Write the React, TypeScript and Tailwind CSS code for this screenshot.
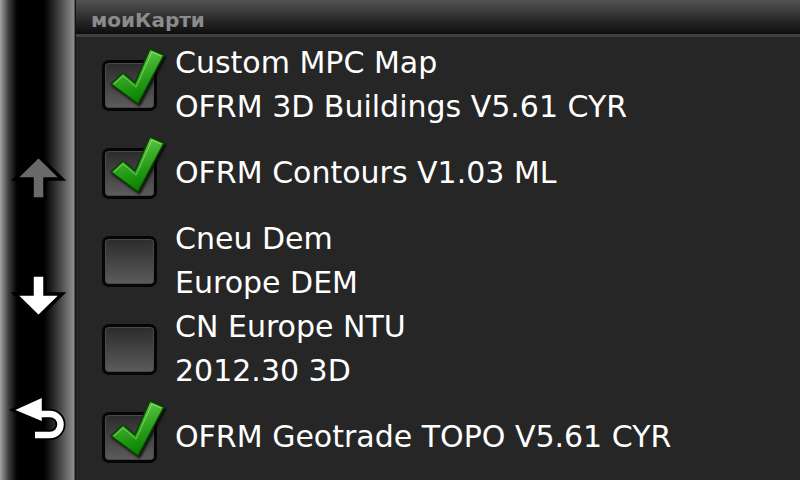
import React from 'react';

type MapItem = {
  lines: string[];
  checked: boolean;
};

const maps: MapItem[] = [
  { lines: ['Custom MPC Map', 'OFRM 3D Buildings V5.61 CYR'], checked: true },
  { lines: ['OFRM Contours V1.03 ML'], checked: true },
  { lines: ['Cneu Dem', 'Europe DEM'], checked: false },
  { lines: ['CN Europe NTU', '2012.30 3D'], checked: false },
  { lines: ['OFRM Geotrade TOPO V5.61 CYR'], checked: true },
];

const CheckMark = ({ id }: { id: string }) => (
  <svg
    className="absolute left-0 top-[-12px]"
    width="68"
    height="62"
    viewBox="0 0 68 62"
  >
    <defs>
      <linearGradient id={`g-${id}`} x1="0" y1="0" x2="0.3" y2="1">
        <stop offset="0" stopColor="#7ddc62" />
        <stop offset="0.45" stopColor="#3fb02a" />
        <stop offset="1" stopColor="#078200" />
      </linearGradient>
      <filter id={`s-${id}`} x="-20%" y="-20%" width="150%" height="150%">
        <feDropShadow dx="1.5" dy="2" stdDeviation="1.2" floodColor="#000" floodOpacity="0.8" />
      </filter>
    </defs>
    <polygon
      points="9,36 21,25 33,35 48,1 62,7 36,56"
      fill={`url(#g-${id})`}
      stroke="#0b3d04"
      strokeWidth="1.5"
      strokeLinejoin="round"
      filter={`url(#s-${id})`}
    />
    <polyline
      points="12,36 21,28 34,39 50,4 59,8"
      fill="none"
      stroke="#a8ee8e"
      strokeOpacity="0.6"
      strokeWidth="1"
    />
  </svg>
);

const CheckBox = ({ checked, id }: { checked: boolean; id: string }) => (
  <div className="relative w-[55px] h-[51px] mt-[9px] shrink-0">
    <div className="w-full h-full rounded-[7px] border-[3px] border-[#050505] bg-gradient-to-b from-[#2c2c2c] to-[#5c5c5c] shadow-[inset_0_0_0_1px_#4a4a4a]" />
    {checked && <CheckMark id={id} />}
  </div>
);

export default function App() {
  return (
    <div className="w-[800px] h-[480px] flex bg-[#262626] overflow-hidden font-['DejaVu_Sans',sans-serif]">
      {/* left rail */}
      <div className="w-[76px] h-full flex flex-col shrink-0 bg-[linear-gradient(to_right,#a4a4a4_0px,#3a3a3a_9px,#000_17px,#000_44px,#3c3c3c_58px,#8e8e8e_74px,#1a1a1a_75px,#111_76px)]">
        <svg className="mt-[150px]" width="76" height="54" viewBox="0 0 76 54">
          <polygon
            points="38.5,6 62,29 45,29 45,49 32,49 32,29 15,29"
            fill="#6a6a6a"
            stroke="#000"
            strokeWidth="3.5"
            strokeLinejoin="miter"
          />
        </svg>
        <svg className="mt-[66px]" width="76" height="50" viewBox="0 0 76 50">
          <polygon
            points="32,5 45,5 45,24 62,24 38.5,47 15,24 32,24"
            fill="#fff"
            stroke="#000"
            strokeWidth="3.5"
            strokeLinejoin="miter"
          />
        </svg>
        <svg className="mt-[72px]" width="76" height="52" viewBox="0 0 76 52">
          <path
            d="M36 22 H50 A10.5 10.5 0 0 1 50 43 H35"
            fill="none"
            stroke="#000"
            strokeWidth="10"
          />
          <polygon points="12,18 43,4 43,31" fill="#fff" stroke="#000" strokeWidth="2.5" />
          <path
            d="M36 22 H50 A10.5 10.5 0 0 1 50 43 H35"
            fill="none"
            stroke="#fff"
            strokeWidth="6.5"
          />
        </svg>
      </div>

      {/* content */}
      <div className="flex-1 flex flex-col">
        <div className="h-[37px] flex items-center pl-[15px] pt-[5px] bg-gradient-to-b from-[#545456] via-[#2f2f2f] to-[#0e0e0e] border-b-[3px] border-[#414141] shrink-0">
          <span className="text-[20px] font-bold text-[#8b8b8b] leading-none">моиКарти</span>
        </div>
        {maps.map((m, i) => (
          <div key={i} className="h-[88px] flex items-center pl-[26px] gap-[18px] shrink-0">
            <CheckBox checked={m.checked} id={String(i)} />
            <div className="flex flex-col mt-[7px] text-white text-[30px] leading-[44px]">
              {m.lines.map((l) => (
                <span key={l}>{l}</span>
              ))}
            </div>
          </div>
        ))}
      </div>
    </div>
  );
}
